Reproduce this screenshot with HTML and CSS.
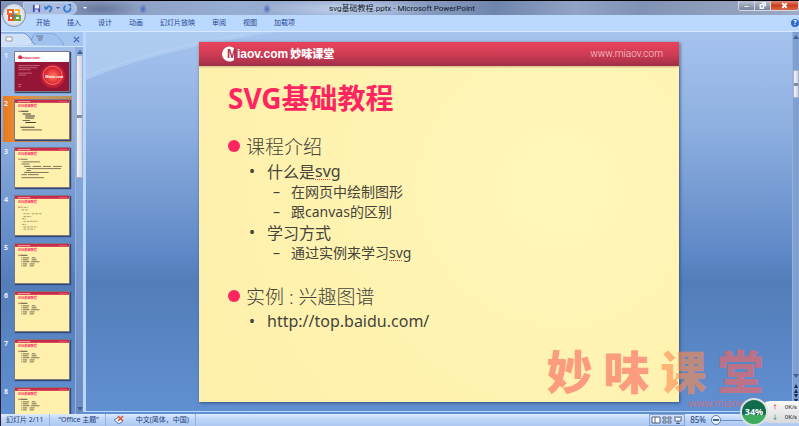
FILE: index.html
```
<!DOCTYPE html>
<html lang="zh-CN">
<head>
<meta charset="utf-8">
<title>svg基础教程.pptx - Microsoft PowerPoint</title>
<link rel="stylesheet" href="styles.css">
</head>
<body>
<svg class="defs" aria-hidden="true">
  <defs>
    <radialGradient id="orb"><stop offset="0" stop-color="#ff7d5c"/><stop offset=".6" stop-color="#e02c38"/><stop offset="1" stop-color="#b01834"/></radialGradient>
    <g id="page">
      <rect width="481" height="360" fill="#fff1ad"/>
      <rect width="481" height="26" fill="#cc2848"/>
      <path d="M26 14h110" stroke="#f4a0ac" stroke-width="8"/>
      <path d="M390 14h76" stroke="#df6a80" stroke-width="6"/>
      <text x="29" y="68" class="mini-title">SVG基础教程</text>
      <circle cx="36" cy="104" r="6" fill="#ff2560"/>
    </g>
    <g id="short" fill="none" stroke="#555040" stroke-width="7">
      <path d="M47 104h64" stroke-width="9"/>
      <path d="M56 128h6M68 128h58M148 128h36M56 146h6M68 146h52M148 146h44M56 164h6M68 164h62M142 164h76M56 184h6M68 184h40M130 184h44M56 202h6M68 202h36M130 202h40"/>
    </g>
  </defs>
</svg>
<div class="app">
  <header class="titlebar">
    <div class="quick">
      <button aria-label="保存"><svg viewBox="0 0 10 10"><path d="M1 1h8v8H1z" fill="#4547ad"/><path d="M3 1h5v4H3z" fill="#eef3ff"/><path d="M3 6h4v3H3z" fill="#b9c5ee"/></svg></button>
      <button aria-label="撤消"><svg viewBox="0 0 10 10"><path d="M3 4c3-3 6-1 5 2l-2 3" fill="none" stroke="#3c75cf" stroke-width="2"/><path d="M0 2l1 5 4-2z" fill="#3c75cf"/></svg></button>
      <i class="caret"></i>
      <button aria-label="重复"><svg viewBox="0 0 10 10"><path d="M3 2a3.5 3.5 0 1 0 5 2" fill="none" stroke="#337bd5" stroke-width="2"/><path d="M5 0h4v4z" fill="#337bd5"/></svg></button>
    </div>
    <i class="caret more"></i>
    <h1>svg基础教程.pptx - Microsoft PowerPoint</h1>
    <div class="window-buttons">
      <button aria-label="最小化"><svg viewBox="0 0 16 10"><path d="M5 5h6v2H5z" fill="#fff" stroke="#555b70" stroke-width=".5"/></svg></button>
      <button aria-label="还原"><svg viewBox="0 0 16 10"><path d="M7 2h4v4M5.500 4h3.500v4H5.500z" fill="none" stroke="#fff" stroke-width="1.500"/></svg></button>
      <button class="close" aria-label="关闭"><svg viewBox="0 0 16 10"><path d="M5.500 2.500l5 5M10.500 2.500l-5 5" stroke="#fff" stroke-width="2"/></svg></button>
    </div>
  </header>
  <button class="office" aria-label="Office 按钮">
    <svg viewBox="0 0 14 14" fill="none" stroke-width="2"><path d="M1 6V2h5v4z" stroke="#f26b21"/><path d="M8 2h4v4H8" stroke="#f4b52c"/><path d="M2 8v4h4V8z" stroke="#e5532c"/><path d="M8 8h5v4H8z" stroke="#69a73a"/><path d="M7 4v6M5 7h5" stroke="#3c7ac4" stroke-width="1"/></svg>
  </button>
  <nav class="ribbon">
    <button>开始</button><button>插入</button><button>设计</button><button>动画</button><button>幻灯片放映</button><button>审阅</button><button>视图</button><button>加载项</button>
    <button class="help" aria-label="帮助">?</button>
  </nav>
  <main>
    <aside>
      <div class="pane-tabs">
        <svg viewBox="0 0 64 14" aria-hidden="true"><path d="M28 13L33 2H52Q55 2 57 5L63 13" fill="#9fc2ee" stroke="#6d96d0"/><path d="M0 14V1H22Q25 1 28 5L34 13H64" fill="#cfe1f8"/><path d="M30 12L33 2H52Q55 2 57 5L62 12z" fill="#9fc2ee"/><path d="M0 1H22Q25 1 28 5L34 13" fill="none" stroke="#6d96d0"/><path d="M5 5h6v4H5z" fill="#fff" stroke="#9a9a9a"/><path d="M35 4h7M37 6h5M37 8h4" stroke="#66738f"/></svg>
        <button aria-label="关闭窗格"><svg viewBox="0 0 8 8"><path d="M1 1l6 6M7 1L1 7" stroke="#3f68ae" stroke-width="1.500"/></svg></button>
      </div>
      <div class="pane-body">
        <ol class="thumbs">
          <li><span>1</span><button aria-label="幻灯片 1"><svg viewBox="0 0 481 360" preserveAspectRatio="none"><rect width="481" height="360" fill="#951536"/><rect width="481" height="92" fill="#fff"/><circle cx="46" cy="48" r="18" fill="#e02c48"/><text x="58" y="62" class="mini-logo">miaov.com</text><path d="M30 125h190M30 145h168M30 163h110M30 195h120M30 213h70M30 300h28M30 320h24" stroke="#d8899a" stroke-width="6"/><circle cx="338" cy="222" r="112" fill="url(#orb)"/><circle cx="335" cy="215" r="84" fill="none" stroke="#ff9980" stroke-width="6"/><text x="270" y="240" class="mini-logo white">Miaov.com</text></svg></button></li>
          <li class="selected"><span>2</span><button aria-label="幻灯片 2" aria-current="true"><svg viewBox="0 0 481 360" preserveAspectRatio="none"><use href="#page"/><g fill="none" stroke="#45423a" stroke-width="9"><path d="M48 104h72M68 130h74M92 148h86M92 167h78M68 188h66M92 207h94M48 252h126"/><path d="M60 276h180" stroke-width="7"/></g></svg></button></li>
          <li><span>3</span><button aria-label="幻灯片 3"><svg viewBox="0 0 481 360" preserveAspectRatio="none"><use href="#page"/><path d="M48 104h64M58 128h8M72 128h150M58 148h70M80 170h60M158 170h76M248 170h72M338 170h78M102 190h308M102 208h40M80 226h220M58 246h50M116 246h94M58 274h200" fill="none" stroke="#5b5444" stroke-width="7"/></svg></button></li>
          <li><span>4</span><button aria-label="幻灯片 4"><svg viewBox="0 0 481 360" preserveAspectRatio="none"><use href="#page"/><path d="M48 104h70M58 128h60M75 164h62M150 164h90M75 190h70M62 210h36M75 234h130M62 262h40M75 286h118M75 306h100" fill="none" stroke="#81775a" stroke-width="6" stroke-dasharray="24 7"/></svg></button></li>
          <li><span>5</span><button aria-label="幻灯片 5"><svg viewBox="0 0 481 360" preserveAspectRatio="none"><use href="#page"/><use href="#short"/></svg></button></li>
          <li><span>6</span><button aria-label="幻灯片 6"><svg viewBox="0 0 481 360" preserveAspectRatio="none"><use href="#page"/><use href="#short"/></svg></button></li>
          <li><span>7</span><button aria-label="幻灯片 7"><svg viewBox="0 0 481 360" preserveAspectRatio="none"><use href="#page"/><use href="#short"/></svg></button></li>
          <li><span>8</span><button aria-label="幻灯片 8"><svg viewBox="0 0 481 360" preserveAspectRatio="none"><use href="#page"/><use href="#short"/></svg></button></li>
        </ol>
        <div class="scroll"><i class="up"></i><div class="thumb"></div><i class="down"></i></div>
      </div>
    </aside>
    <section class="stage">
      <svg class="swoosh" viewBox="0 0 190 52" preserveAspectRatio="none" aria-hidden="true"><path d="M0 0H190Q70 18 0 48z" fill="#b2cdf2" opacity=".75"/><path d="M0 44Q70 16 170 0" fill="none" stroke="#c4daf6" opacity=".5"/></svg>
      <article class="slide">
        <header class="slide-head">
          <div class="brand"><svg viewBox="0 0 16 16" aria-hidden="true"><path d="M13 2A7.500 7.500 0 1 0 13 14z" fill="#fff"/></svg><b><em>M</em>iaov.com</b><strong>妙味课堂</strong></div>
          <span>www.miaov.com</span>
        </header>
        <div class="content">
          <h2>SVG基础教程</h2>
          <ul class="outline">
            <li class="l1">课程介绍</li>
            <li class="l2">什么是<u>svg</u></li>
            <li class="l3">在网页中绘制图形</li>
            <li class="l3">跟canvas的区别</li>
            <li class="l2">学习方式</li>
            <li class="l3">通过实例来学习<u>svg</u></li>
            <li class="l1 next">实例 : 兴趣图谱</li>
            <li class="l2">http://top.baidu.com/</li>
          </ul>
        </div>
      </article>
    </section>
    <div class="scroll main-scroll"><i class="up"></i><div class="thumb"></div><i class="down"></i><div class="pages"><i class="up"></i><i class="up"></i><i class="down"></i><i class="down"></i></div></div>
  </main>
  <footer class="status">
    <span>幻灯片 2/11</span><span>“Office 主题”</span>
    <span class="spell"><svg viewBox="0 0 10 10" aria-hidden="true"><path d="M0 5l5-3 4 4-4 3z" fill="#eef4ff" stroke="#5b79b4"/><path d="M4 1l5 5M9 1L4 6" stroke="#e0522e" stroke-width="1.500"/></svg></span>
    <span>中文(简体，中国)</span>
    <div class="views">
      <button aria-label="普通视图"><svg viewBox="0 0 10 8"><path d="M1 1h8v6H1zM4 1v6" fill="#fff" stroke="#53627f"/></svg></button>
      <button aria-label="幻灯片浏览"><svg viewBox="0 0 10 8"><path d="M1 1h3v2H1zM6 1h3v2H6zM1 5h3v2H1zM6 5h3v2H6z" fill="#fff" stroke="#53627f"/></svg></button>
      <button aria-label="幻灯片放映"><svg viewBox="0 0 10 8"><path d="M1 1h8M2 2v3h6V2M5 5v3M3 7.500h4" fill="#fff" stroke="#53627f"/></svg></button>
    </div>
    <span class="zoom">85%</span>
    <input type="range" min="10" max="190" value="10" aria-label="缩放">
  </footer>
  <div class="watermark"><div><span>妙</span><span>味</span><span class="orange">课</span><span>堂</span></div><small>www.miaov.com</small></div>
  <div class="meter"><b>34%</b><div><p><i class="red">↑</i>0K/s</p><p><i>↓</i>0K/s</p></div></div>
</div>
</body>
</html>
```
FILE: styles.css
```
* { box-sizing: border-box; margin: 0; padding: 0; }
body { font-family: "Noto Sans", "Noto Sans CJK SC", sans-serif; background: #2c1d33; }
button { border: 0; background: none; font: inherit; color: inherit; display: block; }
svg { display: block; }
i, em { font-style: normal; }
ol, ul { list-style: none; }
.defs { position: absolute; width: 0; height: 0; }
.app { position: relative; display: grid; grid-template-rows: 15px 17px minmax(0, 1fr) 12px; height: 100vh; border-left: 1px solid #2c1d33; overflow: hidden; }

.titlebar { position: relative; display: flex; align-items: center; border-top: 1px solid #000; background: radial-gradient(ellipse 4px 5px at 142px 8px, #4a68c0, transparent), radial-gradient(ellipse 4px 5px at 266px 8px, #4a68c0, transparent), radial-gradient(ellipse 90px 12px at 345px 8px, #c3d3ec, transparent), radial-gradient(ellipse 40px 10px at 100px 8px, #66789c, transparent), linear-gradient(100deg, #7f94bb, #8b9cc0 12%, #97add2 30%, #8498bd 55%, #7085ad 62%, #91a4c6 72%, #8193b5 80%, #9caac3); }
.quick { display: flex; align-items: center; gap: 3px; height: 13px; margin-left: 22px; padding: 0 4px 0 8px; border: 1px solid #c1d2ec; border-radius: 0 8px 8px 0; background: #a9bddf; }
.quick svg { width: 9px; height: 9px; }
.caret { border: 2px solid transparent; border-top-color: #355a9c; border-bottom: 0; }
.more { margin-left: 6px; border-top-color: #fff; }
.titlebar h1 { position: absolute; inset: 0; padding-left: 4px; text-align: center; font: 400 8px/16px Roboto, "Noto Sans CJK SC", sans-serif; color: #101828; pointer-events: none; }
.window-buttons { align-self: start; display: flex; margin-left: auto; height: 10px; border: 1px solid #d0d8e6; border-top: 0; border-radius: 0 0 3px 3px; overflow: hidden; }
.window-buttons button { width: 16px; background: linear-gradient(#b8c1d2, #78849e); border-right: 1px solid #d0d8e6; }
.window-buttons .close { width: 27px; border: 0; background: linear-gradient(#df8c75, #c93d1f 50%, #dc6744); }
.window-buttons svg { width: 100%; height: 9px; }
.office { position: absolute; left: 1px; top: 3px; width: 24px; height: 24px; border-radius: 50%; border: 1px solid #8792a8; background: radial-gradient(circle, #fff, #dbe3ef 60%, #9dacc4); z-index: 2; }
.office svg { width: 14px; height: 14px; margin: auto; }

.ribbon { display: flex; align-items: center; gap: 17px; padding: 0 0 0 35px; background: #bbd9fe; border-bottom: 1px solid #d8e9ff; font-size: 7px; line-height: 16px; color: #1e4690; }
.ribbon .help { margin-left: auto; width: 8px; height: 8px; border-radius: 50%; background: #2c68ca; color: #fff; font-size: 7px; line-height: 8px; font-weight: 700; }

main { display: grid; grid-template-columns: 82px minmax(0, 1fr) 7px; min-height: 0; background: linear-gradient(#a6c3ee, #8eafe0 25%, #5e88c6 58%, #527db8 66%, #6190d2); }
aside { display: flex; flex-direction: column; min-height: 0; }
.pane-tabs { display: flex; align-items: center; justify-content: space-between; height: 15px; padding-right: 3px; background: #a4c5f0; border-bottom: 1px solid #d1e3fa; }
.pane-tabs > svg { width: 64px; height: 14px; }
.pane-tabs button svg { width: 7px; height: 7px; }
.pane-body { display: flex; flex: 1; min-height: 0; }
.thumbs { flex: 1; display: flex; flex-direction: column; gap: 2px; padding: 1px 3px 0 2px; overflow: hidden; }
.thumbs li { flex: none; display: flex; align-items: center; height: 46px; }
.thumbs span { align-self: flex-start; width: 11px; padding: 3px 0 0 1px; font-size: 7px; line-height: 10px; font-weight: 700; color: #eaf2ff; }
.thumbs button { flex: 1; margin-right: 2px; border: 1px solid #7c7885; box-shadow: 1px 1px 1px #33486f; }
.thumbs button svg { width: 100%; height: 39px; }
.thumbs .selected { background: linear-gradient(90deg, #e47a22, #ed8b32 20%, #c19a60 60%, #b88f58); }
.mini-title { font-size: 28px; font-weight: 700; fill: #ff2560; }
.mini-logo { font-size: 30px; font-weight: 700; fill: #e02c48; }
.mini-logo.white { fill: #fff; }
.scroll { width: 8px; display: flex; flex-direction: column; align-items: center; padding: 3px 0; background: #7f9fce; border-left: 1px solid #94b2dd; }
.pane-body .scroll { background: linear-gradient(#8fb0e2, #6b8cc2); }
.up, .down { border: 3px solid transparent; }
.up { border-top: 0; border-bottom: 4px solid #44618f; }
.down { border-bottom: 0; border-top: 4px solid #44618f; margin-top: auto; }
.scroll .thumb { width: 7px; height: 34%; margin-top: 1px; background: linear-gradient(#7f8ca4, #7f8ca4) center / 5px 3px no-repeat, linear-gradient(90deg, #f2f4fa, #cfd4e3); border: 1px solid #a5afc5; }
.stage { position: relative; display: flex; justify-content: center; border: 3px solid #b9d8ff; border-width: 0 0 1px 3px; margin-bottom: 2px; padding: 10px 0 9px; }
.swoosh { position: absolute; left: 0; top: 0; width: 27%; height: 52px; }
.main-scroll { width: 7px; }
.main-scroll .thumb { height: 28px; margin-top: 31px; width: 6px; }
.main-scroll .pages { display: grid; gap: 1px; margin-top: 6px; padding-bottom: 8px; }
.main-scroll .pages i { margin: 0; border-left-width: 2px; border-right-width: 2px; border-top-color: #152b55; border-bottom-color: #152b55; }
.main-scroll .pages .up { border-top: 0; }
.main-scroll .pages .down { border-bottom: 0; }

.slide { position: relative; height: 100%; aspect-ratio: 4 / 3; background: radial-gradient(circle at 75% 40%, #fff6ba, #fff2af 60%, #feefaa); box-shadow: 1px 1px 3px #34517d; }
.slide-head { display: flex; align-items: center; justify-content: space-between; height: 24px; padding: 0 16px 0 22px; background: linear-gradient(#e9435b, #d03c55 50%, #a02f49); box-shadow: 0 1px 2px #c9b880; color: #fff; }
.slide-head > span { font: 300 10px/24px Roboto, sans-serif; color: #f7cdd3; }
.brand { display: flex; align-items: center; }
.brand svg { width: 16px; height: 16px; }
.brand b { font: 700 12px/24px "Liberation Sans Narrow", "Liberation Sans", sans-serif; margin-left: -10px; }
.brand em { color: #b53550; }
.brand strong { font-size: 11px; line-height: 24px; font-weight: 900; margin-left: 2px; }
.content { padding: 14px 29px; color: #45433a; }
.content h2 { font-size: 28px; line-height: 36px; font-weight: 700; color: #ff2560; }
.outline { margin-top: 16px; }
.outline li { display: flex; align-items: center; white-space: pre; }
.outline u { text-decoration: underline dotted #e23636 1px; text-underline-offset: 2px; }
.l1 { height: 28px; font-size: 19px; font-weight: 300; }
.l1::before { content: ""; width: 12px; height: 12px; margin-right: 6px; border-radius: 50%; background: #ff2560; }
.next { margin-top: 20px; }
.l2 { height: 21px; padding-left: 21px; font-size: 16px; }
.l2::before { content: "•"; width: 18px; }
.l3 { height: 20px; padding-left: 45px; font-size: 14px; }
.l3::before { content: "–"; width: 18px; }

.status { display: flex; align-items: center; padding-left: 1px; background: linear-gradient(#dbe9fc, #bdd5f8 45%, #adc9f2); color: #1e3c77; font-size: 7px; line-height: 12px; }
.status > span { padding: 0 6px 0 4px; border-right: 1px solid #94b3df; margin-right: 4px; white-space: nowrap; }
.status .spell { border: 0; padding-right: 4px; }
.status .spell svg { width: 10px; height: 10px; }
.views { display: flex; gap: 1px; margin-left: auto; border: 1px solid #86a5d2; padding: 1px; }
.views button { padding: 0; }
.views svg { width: 10px; height: 8px; }
.status > .zoom { border: 0; padding: 0; margin: 0 5px; font-size: 8px; }
.status input { appearance: none; width: 88px; height: 10px; background: linear-gradient(#7090c0, #7090c0) center / 100% 1px no-repeat; }
.status input::-webkit-slider-thumb { appearance: none; width: 10px; height: 10px; border: 1px solid #5e7fae; border-radius: 50%; background: linear-gradient(#45659a, #45659a) center / 6px 2px no-repeat, #eef4fd; }

.watermark { position: absolute; right: 30px; bottom: 19px; width: 228px; color: #fb645d; opacity: .6; text-align: right; }
.watermark div { display: flex; justify-content: space-around; font-size: 46px; line-height: 48px; padding-bottom: 4px; font-weight: 900; }
.watermark .orange { color: #ff8b50; }
.watermark small { display: block; font-size: 10px; line-height: 8px; margin-right: 4px; }
.meter { position: absolute; right: 0; bottom: 0; display: flex; align-items: center; color: #222; }
.meter b { z-index: 1; width: 28px; height: 28px; margin-right: -8px; border: 2px solid #d9e2df; border-radius: 50%; background: linear-gradient(#116c4e 64%, #3dac5c 64%); color: #fff; font-size: 9px; line-height: 24px; text-align: center; }
.meter div { width: 39px; padding: 1px 2px 1px 12px; border-radius: 10px 0 0 10px; background: linear-gradient(#fafafa, #d9d9dc); font-size: 6px; line-height: 10px; }
.meter p { display: flex; justify-content: space-between; }
.meter i { color: #2f9a55; font-weight: 700; }
.meter .red { color: #ea5238; }
```
